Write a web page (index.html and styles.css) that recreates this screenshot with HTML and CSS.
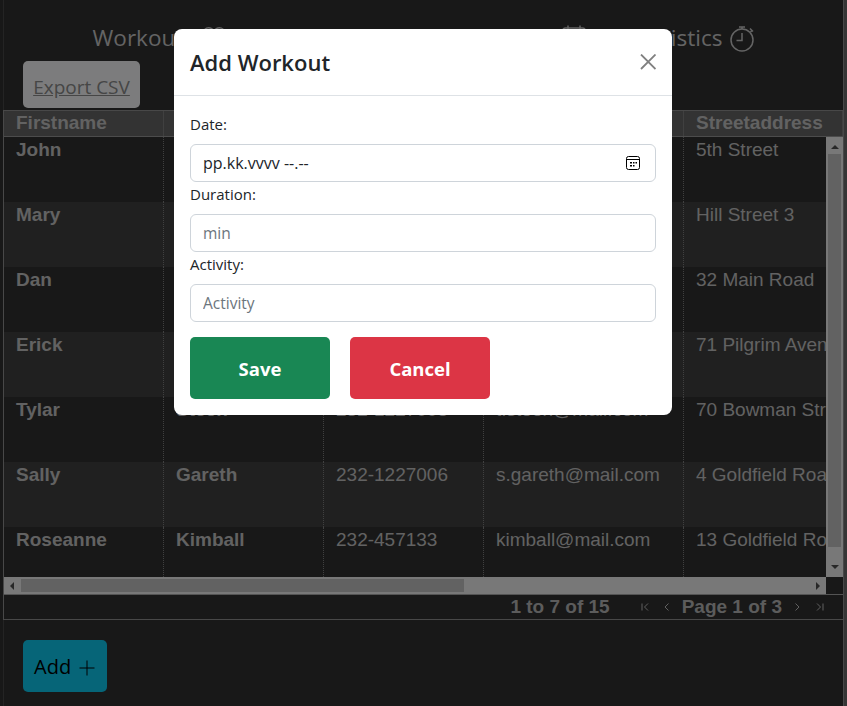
FILE: index.html
```html
<!DOCTYPE html>
<html lang="en">
<head>
    <meta charset="UTF-8">
    <meta name="viewport" content="width=device-width, initial-scale=1.0">
    <title>Workouts</title>
    <link rel="stylesheet" href="styles.css">
</head>
<body>
    <div class="app">
        <nav class="nav">
            <a class="nav-link">Workouts
                <svg class="nav-icon" viewBox="0 0 24 24"><path d="M12 21C5 15.500 1.500 12 1.500 7.800 1.500 4.800 3.800 2.800 6.500 2.800c2.300 0 4.300 1.300 5.500 3.500 1.200-2.200 3.200-3.500 5.500-3.500 2.700 0 5 2 5 5 0 4.200-3.500 7.700-10.500 13.200z"/></svg>
            </a>
            <a class="nav-link">Customers
                <svg class="nav-icon" viewBox="0 0 24 24"><circle cx="12" cy="12" r="4"/><path d="M4 24c0-5 3.500-7 8-7s8 2 8 7"/></svg>
            </a>
            <a class="nav-link">Calendar
                <svg class="nav-icon" viewBox="0 0 24 24"><rect x="1" y="3" width="22" height="20" rx="2.500"/><path d="M1 8h22M6 0.500v4M18 0.500v4"/></svg>
            </a>
            <a class="nav-link">Statistics
                <svg class="nav-icon nav-icon-watch" viewBox="0 0 24 26"><circle cx="12" cy="14" r="11"/><path d="M12 7v7.500H6.500M9 1h6M12 1v2M20 2.500l3 3M20.500 6l1.800-1.800"/></svg>
            </a>
        </nav>

        <button class="btn-export"><u>Export CSV</u></button>

        <div class="grid">
            <div class="grid-header">
                <div class="head-cell">Firstname</div>
                <div class="head-cell">Lastname</div>
                <div class="head-cell">Phone</div>
                <div class="head-cell">Email</div>
                <div class="head-cell">Streetaddress</div>
            </div>
            <div class="grid-middle">
                <div class="grid-rows">
                    <div class="row">
                        <div class="cell strong">John</div>
                        <div class="cell strong">Johnson</div>
                        <div class="cell">232-2345540</div>
                        <div class="cell">john@mail.com</div>
                        <div class="cell">5th Street</div>
                    </div>
                    <div class="row even">
                        <div class="cell strong">Mary</div>
                        <div class="cell strong">Philips</div>
                        <div class="cell">232-5653455</div>
                        <div class="cell">m.phil@mail.com</div>
                        <div class="cell">Hill Street 3</div>
                    </div>
                    <div class="row">
                        <div class="cell strong">Dan</div>
                        <div class="cell strong">Hawk</div>
                        <div class="cell">232-4447788</div>
                        <div class="cell">d.hawk@mail.com</div>
                        <div class="cell">32 Main Road</div>
                    </div>
                    <div class="row even">
                        <div class="cell strong">Erick</div>
                        <div class="cell strong">Stone</div>
                        <div class="cell">232-3349102</div>
                        <div class="cell">e.stone@mail.com</div>
                        <div class="cell">71 Pilgrim Avenue</div>
                    </div>
                    <div class="row">
                        <div class="cell strong">Tylar</div>
                        <div class="cell strong">Steen</div>
                        <div class="cell">232-1227008</div>
                        <div class="cell">t.steen@mail.com</div>
                        <div class="cell">70 Bowman Street</div>
                    </div>
                    <div class="row even">
                        <div class="cell strong">Sally</div>
                        <div class="cell strong">Gareth</div>
                        <div class="cell">232-1227006</div>
                        <div class="cell">s.gareth@mail.com</div>
                        <div class="cell">4 Goldfield Road</div>
                    </div>
                    <div class="row last">
                        <div class="cell strong">Roseanne</div>
                        <div class="cell strong">Kimball</div>
                        <div class="cell">232-457133</div>
                        <div class="cell">kimball@mail.com</div>
                        <div class="cell">13 Goldfield Road</div>
                    </div>
                </div>
                <div class="vscroll">
                    <span class="arrow arrow-up"></span>
                    <div class="vthumb"></div>
                    <span class="arrow arrow-down"></span>
                </div>
            </div>
            <div class="grid-hbar">
                <div class="hscroll">
                    <span class="arrow arrow-left"></span>
                    <div class="hthumb"></div>
                    <span class="arrow arrow-right"></span>
                </div>
                <div class="corner"></div>
            </div>
            <div class="pager">
                <span class="pager-count">1 to 7 of 15</span>
                <svg class="pager-icon first" viewBox="0 0 8 10"><path d="M1 1.500v7M7 1.500 3.500 5 7 8.500"/></svg>
                <svg class="pager-icon prev" viewBox="0 0 8 10"><path d="M5.500 1.500 2 5l3.500 3.500"/></svg>
                <span class="pager-page">Page 1 of 3</span>
                <svg class="pager-icon next" viewBox="0 0 8 10"><path d="M2.500 1.500 6 5 2.500 8.500"/></svg>
                <svg class="pager-icon last" viewBox="0 0 8 10"><path d="M1 1.500 4.500 5 1 8.500M7 1.500v7"/></svg>
            </div>
        </div>

        <button class="btn-add">Add
            <svg class="add-icon" viewBox="0 0 16 16"><path d="M8 0.500v15M0.500 8h15"/></svg>
        </button>
    </div>
    <div class="page-edge"></div>

    <div class="backdrop"></div>

    <div class="modal">
        <div class="modal-header">
            <h2 class="modal-title">Add Workout</h2>
            <svg class="modal-close" viewBox="0 0 16 16"><path d="M1 0.500 15.500 15M15.500 0.500 1 15"/></svg>
        </div>
        <div class="modal-body">
            <label class="form-label">Date:</label>
            <div class="form-control date-control">
                <span>pp.kk.vvvv --.--</span>
                <svg class="date-icon" viewBox="0 0 14 14">
                    <rect x="0.500" y="0.500" width="13" height="13" rx="2" class="date-frame"/>
                    <path d="M1 3.500h12" class="date-frame"/>
                    <path d="M4 6h2v1.500H4zM7 6h1.500v1.500H7zM9.500 6H11v1.500H9.500zM4 9h2v1.500H4zM7 9h1.500v1.500H7z"/>
                </svg>
            </div>
            <label class="form-label">Duration:</label>
            <input class="form-control" type="text" placeholder="min">
            <label class="form-label">Activity:</label>
            <input class="form-control" type="text" placeholder="Activity">
            <div class="modal-actions">
                <button class="btn-modal btn-save">Save</button>
                <button class="btn-modal btn-cancel">Cancel</button>
            </div>
        </div>
    </div>
</body>
</html>
```

FILE: styles.css
```css
* {
    box-sizing: border-box;
}
html, body {
    height: 100%;
}
body {
    margin: 0;
    padding-left: 3px;
    display: flex;
    overflow: hidden;
    background-color: #303030;
    font-family: "Open Sans", "Noto Sans", sans-serif;
}

/* page behind the modal */
.app {
    flex: 1;
    min-width: 0;
    border-left: 1px solid #484848;
    border-right: 1px solid #909090;
}
.page-edge {
    width: 3px;
    background-color: #6c6c6c;
}
.nav {
    display: flex;
    justify-content: center;
    gap: 44px;
    padding-top: 19px;
    height: 61px;
}
.nav-link {
    display: flex;
    align-items: center;
    gap: 8px;
    height: 36px;
    font-size: 22.500px;
    color: #c8c8c8;
}
.nav-icon {
    width: 24px;
    height: 24px;
    fill: none;
    stroke: #c8c8c8;
    stroke-width: 1.500;
}
.nav-icon-watch {
    height: 26px;
    margin-top: 3px;
}
.btn-export {
    display: block;
    margin-left: 19px;
    width: 117px;
    height: 47px;
    padding: 4px 0 0;
    border: none;
    border-radius: 5px;
    background-color: #f8f9fa;
    color: #8c8c8c;
    font-family: inherit;
    font-size: 19px;
}

/* data grid */
.grid {
    margin-top: 2px;
    border-top: 1px solid #909090;
    border-bottom: 1px solid #909090;
    box-shadow: -1px 0 0 #909090;
    font-family: "Liberation Sans", Arial, sans-serif;
    font-size: 19px;
    color: #c4c4c4;
}
.grid-header {
    display: grid;
    grid-template-columns: 160px 160px 160px 200px 1fr;
    height: 26px;
    background-color: #666666;
    border-bottom: 1px solid #999999;
    font-weight: bold;
}
.head-cell {
    padding-left: 12px;
    line-height: 24px;
    border-right: 1px solid #808080;
}
.grid-middle {
    display: flex;
    height: 440px;
}
.grid-rows {
    flex: 1;
    min-width: 0;
    overflow: hidden;
}
.row {
    display: grid;
    grid-template-columns: 160px 160px 160px 200px 200px;
    height: 65px;
}
.row.even {
    background-color: #404040;
}
.row.last {
    height: 50px;
}
.cell {
    padding-left: 12px;
    line-height: 26px;
    white-space: nowrap;
    overflow: hidden;
    border-right: 1px dotted #808080;
}
.cell.strong {
    font-weight: bold;
}

/* scrollbars */
.vscroll {
    width: 17px;
    display: flex;
    flex-direction: column;
    align-items: center;
    background-color: #f1f1f1;
}
.vthumb {
    width: 13px;
    height: 393px;
    background-color: #c4c4c4;
}
.grid-hbar {
    display: flex;
    height: 18px;
    border-bottom: 1px solid #a8a8a8;
}
.hscroll {
    flex: 1;
    display: flex;
    align-items: center;
    background-color: #f1f1f1;
}
.hthumb {
    width: 443px;
    height: 13px;
    background-color: #c4c4c4;
}
.corner {
    width: 17px;
    background-color: #303030;
}
.arrow {
    display: block;
    width: 0;
    height: 0;
    border-style: solid;
    border-color: transparent;
}
.arrow-up {
    margin: 8px 0 5px;
    border-width: 0 4px 4px;
    border-bottom-color: #505050;
}
.arrow-down {
    margin: auto 0 8px;
    border-width: 4px 4px 0;
    border-top-color: #505050;
}
.arrow-left {
    margin: 0 7px 0 6px;
    border-width: 4px 4px 4px 0;
    border-right-color: #505050;
}
.arrow-right {
    margin: 0 6px 0 auto;
    border-width: 4px 0 4px 4px;
    border-left-color: #505050;
}

/* pagination */
.pager {
    display: flex;
    align-items: center;
    justify-content: flex-end;
    height: 24px;
    font-weight: bold;
    color: #b8b8b8;
    line-height: 24px;
}
.pager-count {
    margin-right: 31px;
}
.pager-page {
    margin: 0 11px;
}
.pager-icon {
    width: 8px;
    height: 10px;
    fill: none;
    stroke: #c0c0c0;
    stroke-width: 1;
}
.pager-icon.first {
    margin-right: 14px;
}
.pager-icon.last {
    margin-left: 15px;
    margin-right: 19px;
}
.btn-add {
    display: flex;
    align-items: center;
    gap: 8px;
    margin: 20px 0 0 19px;
    width: 84px;
    height: 52px;
    padding: 0 0 0 11px;
    border: none;
    border-radius: 5px;
    background-color: #0dcaf0;
    color: #000000;
    font-family: inherit;
    font-size: 20px;
}
.add-icon {
    width: 16px;
    height: 16px;
    margin-top: 3px;
    fill: none;
    stroke: #000000;
    stroke-width: 1;
}

/* modal */
.backdrop {
    position: fixed;
    top: 0;
    left: 0;
    right: 0;
    bottom: 0;
    background-color: rgba(0, 0, 0, 0.5);
}
.modal {
    position: fixed;
    top: 29px;
    left: 174px;
    width: 498px;
    height: 386px;
    border-radius: 8px;
    background-color: #ffffff;
    color: #212529;
}
.modal-header {
    display: flex;
    align-items: center;
    justify-content: space-between;
    height: 67px;
    padding: 0 16px;
    border-bottom: 1px solid #dee2e6;
}
.modal-title {
    margin: 0;
    font-size: 22px;
    font-weight: 600;
}
.modal-close {
    width: 16px;
    height: 16px;
    fill: none;
    stroke: #808080;
    stroke-width: 1.800;
}
.modal-body {
    padding: 16px;
}
.form-label {
    display: block;
    margin-bottom: 8px;
    line-height: 24px;
    font-size: 15px;
}
.form-control {
    display: block;
    width: 100%;
    height: 38px;
    padding: 0 12px;
    border: 1px solid #ced4da;
    border-radius: 6px;
    background-color: #ffffff;
    color: #212529;
    font-family: inherit;
    font-size: 15.500px;
}
.form-control::placeholder {
    color: #6c757d;
    opacity: 1;
}
.date-control {
    display: flex;
    align-items: center;
    justify-content: space-between;
    font-size: 16px;
}
.date-icon {
    width: 14px;
    height: 14px;
    margin-right: 3px;
    fill: #000000;
}
.date-frame {
    fill: none;
    stroke: #000000;
    stroke-width: 1;
}
.modal-actions {
    display: flex;
    gap: 20px;
    margin-top: 15px;
}
.btn-modal {
    width: 140px;
    height: 62px;
    border: none;
    border-radius: 5px;
    color: #ffffff;
    font-family: inherit;
    font-size: 18.500px;
    font-weight: 700;
}
.btn-save {
    background-color: #198754;
}
.btn-cancel {
    background-color: #dc3545;
}
```
